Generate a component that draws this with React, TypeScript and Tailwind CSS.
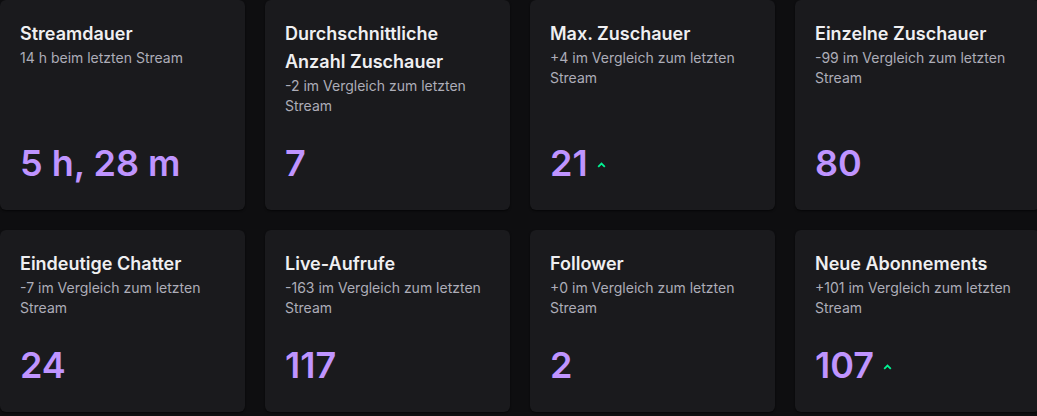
const stats = [
  { title: 'Streamdauer', note: '14 h beim letzten Stream', value: '5 h, 28 m', up: false },
  { title: 'Durchschnittliche Anzahl Zuschauer', note: '-2 im Vergleich zum letzten Stream', value: '7', up: false },
  { title: 'Max. Zuschauer', note: '+4 im Vergleich zum letzten Stream', value: '21', up: true },
  { title: 'Einzelne Zuschauer', note: '-99 im Vergleich zum letzten Stream', value: '80', up: false },
  { title: 'Eindeutige Chatter', note: '-7 im Vergleich zum letzten Stream', value: '24', up: false },
  { title: 'Live-Aufrufe', note: '-163 im Vergleich zum letzten Stream', value: '117', up: false },
  { title: 'Follower', note: '+0 im Vergleich zum letzten Stream', value: '2', up: false },
  { title: 'Neue Abonnements', note: '+101 im Vergleich zum letzten Stream', value: '107', up: true },
];

function ChevronUp() {
  return (
    <svg width="9" height="6" viewBox="0 0 9 6" className="ml-[9px] mt-[4px]">
      <path d="M1.2 4.8 L4.5 1.6 L7.8 4.8" fill="none" stroke="#00f593" strokeWidth="1.8" />
    </svg>
  );
}

export default function App() {
  return (
    <div className="w-[1037px] h-[416px] overflow-hidden bg-[#0e0e10] font-['Inter',sans-serif]">
      <div className="w-[1040px] grid grid-cols-4 gap-5">
        {stats.map((s, i) => (
          <div key={i} className="bg-[#1a1a1d] rounded-md shadow-[0_1px_2px_rgba(0,0,0,0.6)] px-5 pt-5 pb-[27px] flex flex-col">
            <div className="text-lg leading-7 font-semibold text-[#efeff1]">{s.title}</div>
            <div className="text-sm leading-5 text-[#adadb8]">{s.note}</div>
            <div className="mt-auto pt-[27px] flex items-center">
              <span className="text-4xl leading-10 font-semibold text-[#bf94ff]">{s.value}</span>
              {s.up && <ChevronUp />}
            </div>
          </div>
        ))}
      </div>
    </div>
  );
}
